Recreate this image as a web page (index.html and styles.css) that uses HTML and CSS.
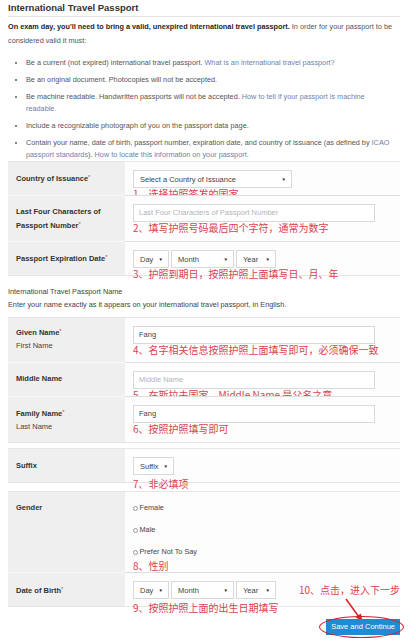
FILE: index.html
```html
<!DOCTYPE html>
<html>
<head>
<meta charset="utf-8">
<link rel="stylesheet" href="styles.css">
</head>
<body>
<div class="page">
  <h1 class="title">International Travel Passport</h1>
  <p class="intro"><b>On exam day, you'll need to bring a valid, unexpired international travel passport.</b> In order for your passport to be considered valid it must:</p>
  <ul class="reqs">
    <li>Be a current (not expired) international travel passport. <a>What is an international travel passport?</a></li>
    <li>Be an original document. Photocopies will not be accepted.</li>
    <li>Be machine readable. Handwritten passports will not be accepted. <a>How to tell if your passport is machine readable.</a></li>
    <li>Include a recognizable photograph of you on the passport data page.</li>
    <li>Contain your name, date of birth, passport number, expiration date, and country of issuance (as defined by <a>ICAO passport standards</a>). <a>How to locate this information on your passport.</a></li>
  </ul>

  <div class="form form-first">
    <div class="row">
      <div class="label">Country of Issuance<span class="req">*</span></div>
      <div class="field">
        <div class="sel sel-country">Select a Country of Issuance</div>
        <div class="note">1、选择护照签发的国家</div>
      </div>
    </div>
    <div class="row">
      <div class="label">Last Four Characters of Passport Number<span class="req">*</span></div>
      <div class="field">
        <div class="inp ph">Last Four Characters of Passport Number</div>
        <div class="note note-open">2、填写护照号码最后四个字符，通常为数字</div>
      </div>
    </div>
    <div class="row">
      <div class="label">Passport Expiration Date<span class="req">*</span></div>
      <div class="field">
        <div class="date">
          <div class="sel sel-day">Day</div>
          <div class="sel sel-month">Month</div>
          <div class="sel sel-year">Year</div>
        </div>
        <div class="note">3、护照到期日，按照护照上面填写日、月、年</div>
      </div>
    </div>
  </div>

  <div class="section-text">
    <div>International Travel Passport Name</div>
    <div>Enter your name exactly as it appears on your international travel passport, in English.</div>
  </div>

  <div class="form">
    <div class="row">
      <div class="label label-two">Given Name<span class="req">*</span><br><span class="sub">First Name</span></div>
      <div class="field">
        <div class="inp">Fang</div>
        <div class="note note-open">4、名字相关信息按照护照上面填写即可，必须确保一致</div>
      </div>
    </div>
    <div class="row">
      <div class="label">Middle Name</div>
      <div class="field">
        <div class="inp ph">Middle Name</div>
        <div class="note">5、在斯拉夫国家，Middle Name 是父名之意</div>
      </div>
    </div>
    <div class="row">
      <div class="label">Family Name<span class="req">*</span><br><span class="sub">Last Name</span></div>
      <div class="field">
        <div class="inp">Fang</div>
        <div class="note note-open">6、按照护照填写即可</div>
      </div>
    </div>
  </div>

  <div class="form form-gap">
    <div class="row">
      <div class="label label-low">Suffix</div>
      <div class="field">
        <div class="sel sel-suffix">Suffix</div>
        <div class="note note-low">7、非必填项</div>
      </div>
    </div>
  </div>

  <div class="form form-gap2">
    <div class="row">
      <div class="label">Gender</div>
      <div class="field field-radios">
        <div class="radio"><span class="dot"></span>Female</div>
        <div class="radio"><span class="dot"></span>Male</div>
        <div class="radio"><span class="dot"></span>Prefer Not To Say</div>
        <div class="note note-radio">8、性别</div>
      </div>
    </div>
    <div class="row">
      <div class="label label-low">Date of Birth<span class="req">*</span></div>
      <div class="field">
        <div class="date">
          <div class="sel sel-day">Day</div>
          <div class="sel sel-month">Month</div>
          <div class="sel sel-year">Year</div>
        </div>
        <div class="note note-low">9、按照护照上面的出生日期填写</div>
      </div>
    </div>
  </div>

  <div class="actions">
    <div class="callout">10、点击，进入下一步</div>
    <svg class="arrow" width="24" height="26" viewBox="0 0 24 26">
      <path d="M3 2 L16 20" stroke="#d8262f" stroke-width="1.6" fill="none"/>
      <path d="M19.5 25 L12.5 20 L18 16.5 Z" fill="#d8262f"/>
    </svg>
    <div class="btn-wrap"><span class="btn">Save and Continue</span></div>
  </div>
</div>
</body>
</html>
```

FILE: styles.css
```css
body {
  margin: 0;
  background: #ffffff;
  font-family: "Liberation Sans", Arial, sans-serif;
  font-size: 7.3px;
  color: #555555;
}

.page {
  padding: 0 16px 0 8px;
}

.title {
  margin: 0;
  padding: 2px 0 2px;
  font-size: 9.5px;
  line-height: 12px;
  font-weight: bold;
  color: #333333;
  border-bottom: 1px solid #e4e4e4;
}

.intro {
  margin: 3px 0 0;
  line-height: 14px;
}

.intro b {
  color: #262626;
}

a {
  color: #6f82a9;
  text-decoration: none;
}

.reqs {
  margin: 9px 0 0;
  padding: 0 8px 0 18px;
}

.reqs li {
  line-height: 12px;
  margin-bottom: 5px;
}

.reqs li:last-child {
  margin-bottom: 0;
}

.form {
  margin-top: 4px;
  border-top: 1px solid #e6e6e6;
  border-bottom: 1px solid #e6e6e6;
}

.form-first {
  margin-top: 0;
}

.row {
  display: grid;
  grid-template-columns: 117px 1fr;
}

.row + .row > .label {
  border-top: 1px solid #f8f8f8;
}

.row + .row > .field {
  border-top: 1px solid #dedede;
}

.label {
  background: #efefef;
  padding: 9px 2px 9px 8px;
  line-height: 13px;
  font-size: 7.5px;
  font-weight: bold;
  color: #333333;
}

.label-two {
  padding-top: 7px;
  padding-bottom: 10px;
}

.label-low {
  padding-top: 10px;
}

.req {
  color: #c44;
  font-weight: normal;
  font-size: 6px;
  vertical-align: 2px;
}

.sub {
  font-weight: normal;
  color: #444444;
}

.field {
  background: #fdfdfd;
  padding: 8px 0 0 8px;
}

.sel {
  box-sizing: border-box;
  display: flex;
  align-items: center;
  justify-content: space-between;
  height: 18px;
  padding: 0 5px 0 6px;
  border: 1px solid #d9d9d9;
  background: #ffffff;
  color: #444444;
  font-size: 7.5px;
}

.sel::after {
  content: "▼";
  font-size: 4.5px;
  color: #222222;
}

.sel-country { width: 159px; }
.sel-day { width: 36px; }
.sel-month { width: 63px; }
.sel-year { width: 40px; }
.sel-suffix { width: 41px; }

.date {
  display: flex;
  gap: 2px;
}

.inp {
  box-sizing: border-box;
  width: 242px;
  height: 18px;
  line-height: 16px;
  padding: 0 5px;
  border: 1px solid #d9d9d9;
  background: #ffffff;
  color: #444444;
  font-size: 7.5px;
}

.inp.ph {
  color: #b4b4b4;
}

.note {
  font-family: "Noto Sans CJK SC", "Liberation Sans", sans-serif;
  font-size: 10px;
  line-height: 12px;
  color: #d9434f;
  margin-bottom: -5px;
  white-space: nowrap;
}

.note-open {
  margin-bottom: 0;
}

.note-low {
  margin-top: 3px;
  margin-bottom: -8px;
}

.section-text {
  margin-top: 9px;
  line-height: 13px;
  color: #444444;
}

.section-text + .form {
  margin-top: 6px;
}

.form-gap {
  margin-top: 5px;
}

.form-gap2 {
  margin-top: 8px;
}

.field-radios {
  padding-top: 5px;
}

.radio {
  line-height: 22px;
  color: #444444;
  display: flex;
  align-items: center;
}

.dot {
  width: 3px;
  height: 3px;
  border: 0.5px solid #999999;
  border-radius: 50%;
  margin-right: 1.5px;
}

.note-radio {
  margin-top: -3px;
  margin-bottom: 0;
}

.actions {
  position: relative;
  display: flex;
  justify-content: flex-end;
  margin-top: 12px;
  height: 22px;
}

.btn-wrap {
  position: relative;
  height: 16px;
}

.btn-wrap::after {
  content: "";
  position: absolute;
  left: -7px;
  right: -4px;
  top: -3px;
  bottom: -3px;
  border: 1.5px solid #d0202e;
  border-radius: 50%;
}

.btn {
  display: block;
  background: #1f8bd3;
  color: #ffffff;
  font-size: 7.5px;
  line-height: 16px;
  padding: 0 5px;
}

.callout {
  position: absolute;
  right: 0;
  top: -35px;
  font-family: "Noto Sans CJK SC", "Liberation Sans", sans-serif;
  font-size: 10px;
  line-height: 12px;
  color: #d9434f;
  white-space: nowrap;
}

.arrow {
  position: absolute;
  right: 33px;
  top: -22px;
}
```
